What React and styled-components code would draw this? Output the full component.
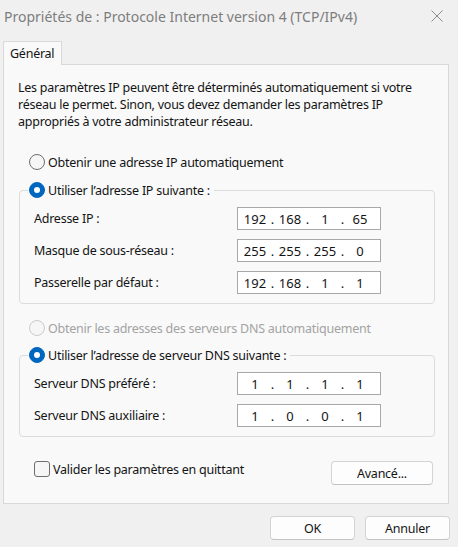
import React from "react";
import styled, { createGlobalStyle } from "styled-components";

const Global = createGlobalStyle`
  html, body { margin: 0; padding: 0; background: #f0f0f0; }
  body { font-family: "Noto Sans", "Open Sans", sans-serif; }
  *, *::before, *::after { box-sizing: border-box; }
`;

const Window = styled.div`
  width: 458px;
  height: 547px;
  background: #f0f0f0;
  display: flex;
  flex-direction: column;
  overflow: hidden;
  font-size: 12.5px;
  letter-spacing: -0.25px;
  color: #141414;
`;

const TitleBar = styled.div`
  height: 32px;
  flex: none;
  display: flex;
  align-items: center;
  justify-content: space-between;
  padding: 0 15px 0 4px;
`;

const Title = styled.div`
  font-size: 14px;
  letter-spacing: 0;
  color: #7d7d7d;
  white-space: nowrap;
`;

const CloseIcon = styled.svg`
  width: 12px;
  height: 12px;
  display: block;
`;

const TabStrip = styled.div`
  display: flex;
  padding: 9px 0 0 3px;
  flex: none;
`;

const Tab = styled.div`
  height: 24px;
  width: 59px;
  padding: 0 0 0 6px;
  display: flex;
  align-items: center;
  background: #f9f9f9;
  border: 1px solid #d9d9d9;
  border-bottom: none;
  margin-bottom: -1px;
  position: relative;
  z-index: 1;
`;

const Panel = styled.div`
  margin: 0 9px 0 3px;
  height: 440px;
  flex: none;
  background: #f9f9f9;
  border: 1px solid #d9d9d9;
  padding: 0 13px 0 14px;
  display: flex;
  flex-direction: column;
`;

const Description = styled.p`
  margin: 14px 0 0 0;
  line-height: 17px;
`;

const OptionRow = styled.label`
  display: flex;
  align-items: center;
  height: 18px;
  margin: ${(p) => p.$mt || 0}px 0 0 11px;
  color: ${(p) => (p.$disabled ? "#a3a3a3" : "#141414")};
  gap: 3px;
  white-space: nowrap;
`;

const Radio = styled.span`
  width: 16px;
  height: 16px;
  flex: none;
  border-radius: 50%;
  display: flex;
  align-items: center;
  justify-content: center;
  background: ${(p) => (p.$checked ? "#0067c0" : "#f6f6f6")};
  border: 1px solid
    ${(p) => (p.$checked ? "#0067c0" : p.$disabled ? "#cacaca" : "#6e6e6e")};
  &::after {
    content: "";
    display: ${(p) => (p.$checked ? "block" : "none")};
    width: 6px;
    height: 6px;
    border-radius: 50%;
    background: #ffffff;
  }
`;

const Group = styled.fieldset`
  margin: ${(p) => p.$mt}px 0 0 1px;
  padding: 0 53px ${(p) => p.$pb}px 14px;
  border: 1px solid #dcdcdc;
  border-radius: 4px;
  min-width: 0;
  display: flex;
  flex-direction: column;
  gap: 9px;
`;

const Legend = styled.legend`
  padding: 0 4px 0 1px;
  margin-left: -6px;
  height: 18px;
  display: flex;
  align-items: center;
  gap: 3px;
  white-space: nowrap;
`;

const FieldRow = styled.div`
  display: grid;
  grid-template-columns: 1fr 144px;
  align-items: center;
  height: 23px;
  &:first-of-type {
    margin-top: 8px;
  }
`;

const FieldLabel = styled.span`
  white-space: nowrap;
`;

const IpBox = styled.div`
  height: 23px;
  border: 1px solid #a8a8a8;
  background: #ffffff;
  display: flex;
  align-items: center;
  padding: 0 1px 0 2px;
  font-size: 13px;
  letter-spacing: 0;
`;

const Octet = styled.span`
  width: 30px;
  text-align: center;
`;

const Dot = styled.span`
  width: 5px;
  text-align: center;
`;

const BottomRow = styled.div`
  display: flex;
  justify-content: space-between;
  align-items: flex-start;
  margin: 24px 2px 0 16px;
`;

const CheckLabel = styled.label`
  display: flex;
  align-items: center;
  gap: 3px;
  height: 16px;
  white-space: nowrap;
`;

const Checkbox = styled.span`
  width: 16px;
  height: 16px;
  flex: none;
  border-radius: 3px;
  border: 1px solid #6e6e6e;
  background: #f6f6f6;
`;

const Button = styled.button`
  width: ${(p) => p.$w}px;
  height: 24px;
  border: 1px solid #d3d3d3;
  border-bottom-color: #c2c2c2;
  border-radius: 4px;
  background: #fdfdfd;
  font-family: inherit;
  font-size: inherit;
  letter-spacing: inherit;
  color: #141414;
  padding: 0;
`;

const Footer = styled.div`
  display: flex;
  justify-content: flex-end;
  gap: 10px;
  padding: 12px 8px 0 0;
`;

function IpValue({ parts }) {
  return (
    <IpBox>
      {parts.map((p, i) => (
        <React.Fragment key={i}>
          <Octet>{p}</Octet>
          {i < 3 && <Dot>.</Dot>}
        </React.Fragment>
      ))}
    </IpBox>
  );
}

export default function App() {
  return (
    <Window>
      <Global />
      <TitleBar>
        <Title>Propriétés de : Protocole Internet version 4 (TCP/IPv4)</Title>
        <CloseIcon viewBox="0 0 12 12">
          <path d="M0.5 0.5 L11.5 11.5 M11.5 0.5 L0.5 11.5" stroke="#8c8c8c" strokeWidth="1" fill="none" />
        </CloseIcon>
      </TitleBar>
      <TabStrip>
        <Tab>Général</Tab>
      </TabStrip>
      <Panel>
        <Description>
          Les paramètres IP peuvent être déterminés automatiquement si votre
          réseau le permet. Sinon, vous devez demander les paramètres IP
          appropriés à votre administrateur réseau.
        </Description>
        <OptionRow $mt={23}>
          <Radio />
          Obtenir une adresse IP automatiquement
        </OptionRow>
        <Group $mt={10} $pb={9}>
          <Legend>
            <Radio $checked />
            Utiliser l’adresse IP suivante :
          </Legend>
          <FieldRow>
            <FieldLabel>Adresse IP :</FieldLabel>
            <IpValue parts={["192", "168", "1", "65"]} />
          </FieldRow>
          <FieldRow>
            <FieldLabel>Masque de sous-réseau :</FieldLabel>
            <IpValue parts={["255", "255", "255", "0"]} />
          </FieldRow>
          <FieldRow>
            <FieldLabel>Passerelle par défaut :</FieldLabel>
            <IpValue parts={["192", "168", "1", "1"]} />
          </FieldRow>
        </Group>
        <OptionRow $mt={15} $disabled>
          <Radio $disabled />
          Obtenir les adresses des serveurs DNS automatiquement
        </OptionRow>
        <Group $mt={9} $pb={9}>
          <Legend>
            <Radio $checked />
            Utiliser l’adresse de serveur DNS suivante :
          </Legend>
          <FieldRow>
            <FieldLabel>Serveur DNS préféré :</FieldLabel>
            <IpValue parts={["1", "1", "1", "1"]} />
          </FieldRow>
          <FieldRow>
            <FieldLabel>Serveur DNS auxiliaire :</FieldLabel>
            <IpValue parts={["1", "0", "0", "1"]} />
          </FieldRow>
        </Group>
        <BottomRow>
          <CheckLabel>
            <Checkbox />
            Valider les paramètres en quittant
          </CheckLabel>
          <Button $w={102}>Avancé...</Button>
        </BottomRow>
      </Panel>
      <Footer>
        <Button $w={85}>OK</Button>
        <Button $w={85}>Annuler</Button>
      </Footer>
    </Window>
  );
}
